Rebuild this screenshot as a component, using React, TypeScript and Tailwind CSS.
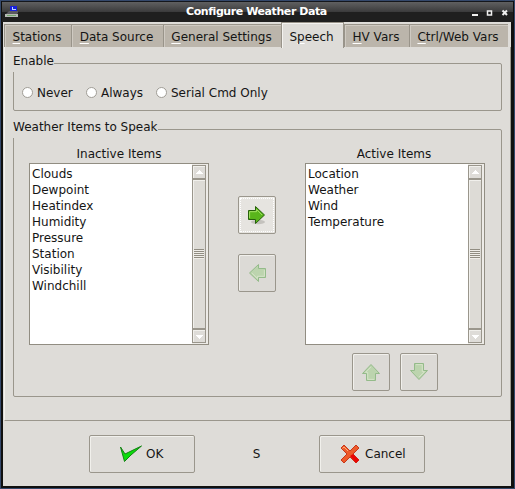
import React from 'react';

const edge = 'border border-[#9a968c] shadow-[inset_1px_1px_0_#f1f0ec]';

function Tab({ before = '', k, rest, w, active = false }: { before?: string; k: string; rest: string; w: string; active?: boolean }) {
  return (
    <div
      className={`${w} flex shrink-0 justify-center border-t border-l border-[#99948a] pr-[2px] ${
        active ? 'h-[26px] border-r bg-[#dedcd8] pt-[6px] shadow-[inset_1px_1px_0_#f4f3f0]' : 'mb-px h-[23px] bg-[#bbb5ab] pt-1 shadow-[inset_1px_1px_0_#cfcac2]'
      }`}
    >
      <span className="h-[17px] leading-[17px]">
        {before}
        <span className="underline decoration-white decoration-1 underline-offset-2">{k}</span>
        {rest}
      </span>
    </div>
  );
}

function Radio({ label, w }: { label: string; w: string }) {
  return (
    <label className={`${w} flex items-center`}>
      <span className="mr-[4px] h-[11px] w-[11px] rounded-full border border-[#a09d96] bg-white" />
      {label}
    </label>
  );
}

function ScrollButton({ down = false }: { down?: boolean }) {
  return (
    <div className={`h-[14px] w-[14px] shrink-0 bg-[#dedcd8] ${edge}`}>
      <svg width="12" height="12" shapeRendering="crispEdges">
        <path d={down ? 'M2 5h8l-4 4z' : 'M2 8h8l-4 -4z'} fill="#fff" />
      </svg>
    </div>
  );
}

function ListBox({ items }: { items: string[] }) {
  return (
    <div className="flex h-[182px] w-[180px] border border-[#918d82] bg-white">
      <ul className="grow pt-[2px] pl-[2px] leading-4">
        {items.map((i) => (
          <li key={i}>{i}</li>
        ))}
      </ul>
      <div className="flex w-[16px] flex-col bg-[#edebe7] py-px pr-[2px]">
        <ScrollButton />
        <div className={`flex w-[14px] grow flex-col items-center justify-center bg-[#dddbd6] ${edge}`}>
          {[0, 1, 2, 3, 4].map((n) => (
            <div key={n} className="h-[2px] w-[10px] border-t border-[#918d82] bg-[#f0eee9]" />
          ))}
        </div>
        <ScrollButton down />
      </div>
    </div>
  );
}

function Arrow({ turn = '', off = false, focus = false }: { turn?: string; off?: boolean; focus?: boolean }) {
  return (
    <button className={`flex h-[38px] w-[38px] rounded-[2px] p-px ${edge} ${off ? 'bg-[#dcdad6]' : 'bg-[#e6e4e0]'}`}>
      <span className={`flex h-full w-full items-center justify-center border ${focus ? 'border-dotted border-white' : 'border-transparent'}`}>
        <svg width="20" height="20" viewBox="0 0 20 20" className={`${turn} ${off ? 'opacity-65' : ''}`}>
          {!off && <ellipse cx="11" cy="17" rx="7" ry="2.2" fill="#77746c" opacity=".3" />}
          <path d="M1.500 5.500h7v-4l9 8.500-9 8.500v-4h-7z" fill={off ? '#acd299' : '#59b51b'} stroke={off ? '#6fab62' : '#27600c'} />
          <path d="M2.600 13V6.700h7V4.500l5.500 5.500" fill="none" stroke={off ? '#d3e8c2' : '#a3e064'} />
        </svg>
      </span>
    </button>
  );
}

export default function App() {
  return (
    <div className="flex h-[489px] w-[515px] flex-col overflow-hidden border border-[#34486b] bg-[#10100f] pr-[3px] pb-[2px] pl-[2px] font-['DejaVu_Sans',sans-serif] text-[12px] text-[#151515]">
      <header className="-mr-[2px] -ml-px flex h-[21px] shrink-0 items-center border-t border-[#15171c] bg-[linear-gradient(#606061,#3c3c3d_48%,#1f1f1f_50%,#1f1f1f)] text-white">
        <svg width="16" height="14" viewBox="0 0 16 14" className="ml-[3px] shrink-0">
          <path d="M5 1h7v5H5z" fill="#1720dc" />
          <path d="M7 2h1v2h3v1H7z" fill="#bcd6ff" />
          <path d="M2 8l2-2h9v2l-1 1H1z" fill="#5b5960" />
          <path d="M0 9h13v3H0z" fill="#b5b9b4" />
          <path d="M2 10h9v1H2z" fill="#71a66c" />
        </svg>
        <h1 className="grow pl-[165px] text-[11px] font-bold tracking-[-0.42px]">Configure Weather Data</h1>
        <svg width="38" height="10" viewBox="0 0 38 10" className="mr-[3px] shrink-0" fill="none" stroke="#f0f0f0">
          <path d="M0 8h6" strokeWidth="2" />
          <path d="M15.500 4h4v4h-4z" strokeWidth="1.5" />
          <path d="M30.500 3.500l4.500 4.500M35 3.500l-4.500 4.500" strokeWidth="2" />
        </svg>
      </header>
      <main className="flex min-h-0 grow flex-col bg-[#dedcd8]">
        <nav className="flex h-[26px] shrink-0 items-end pl-px">
          <Tab k="S" rest="tations" w="w-[67px]" />
          <Tab k="D" rest="ata Source" w="w-[92px]" />
          <Tab k="G" rest="eneral Settings" w="w-[118px]" />
          <Tab before="S" k="p" rest="eech" w="w-[63px]" active />
          <Tab k="H" rest="V Vars" w="w-[65px]" />
          <Tab k="C" rest="trl/Web Vars" w="w-[99px]" />
        </nav>
        <section className="-mt-px ml-px h-[374px] shrink-0 border-r border-b border-l border-[#9a968c] border-l-[#f3f2ef] px-[8px] pt-[7px]">
          <fieldset className="h-[57px] rounded-[2px] border border-[#9a968c]">
            <legend className="-ml-px h-[18px] leading-[14px]">Enable</legend>
            <div className="flex h-[32px] items-center pt-[9px] pl-[8px]">
              <Radio label="Never" w="w-[64px]" />
              <Radio label="Always" w="w-[70px]" />
              <Radio label="Serial Cmd Only" w="w-[130px]" />
            </div>
          </fieldset>
          <fieldset className="mt-[9px] h-[277px] rounded-[2px] border border-[#9a968c]">
            <legend className="-ml-px h-[18px] leading-[14px]">Weather Items to Speak</legend>
            <div className="flex pt-[9px] pl-[15px]">
              <div className="w-[180px]">
                <div className="h-[16px] text-center leading-[14px]">Inactive Items</div>
                <ListBox items={['Clouds', 'Dewpoint', 'Heatindex', 'Humidity', 'Pressure', 'Station', 'Visibility', 'Windchill']} />
              </div>
              <div className="flex w-[96px] flex-col items-center gap-[20px] pt-[49px]">
                <Arrow focus />
                <Arrow turn="rotate-180" off />
              </div>
              <div className="w-[180px]">
                <div className="h-[16px] pr-[2px] text-center leading-[14px]">Active Items</div>
                <ListBox items={['Location', 'Weather', 'Wind', 'Temperature']} />
                <div className="mt-[8px] flex gap-[10px] pl-[47px]">
                  <Arrow turn="-rotate-90" off />
                  <Arrow turn="rotate-90" off />
                </div>
              </div>
            </div>
          </fieldset>
        </section>
        <footer className="flex items-center pt-[14px] pl-[86px]">
          <button className={`flex h-[38px] w-[106px] items-center rounded-[2px] pl-[29px] ${edge}`}>
            <svg width="24" height="20" viewBox="0 0 24 20">
              <path d="M1.500 3l4.500 7L22.500 2 12 11 5.500 17.500z" fill="#0bdc0b" stroke="#138313" />
            </svg>
            <span className="ml-[3px]">OK</span>
          </button>
          <div className="w-[124px] pr-px text-center">S</div>
          <button className={`flex h-[38px] w-[106px] items-center rounded-[2px] pl-[20px] ${edge}`}>
            <svg width="20" height="20" viewBox="0 0 20 20">
              <path d="M1 4l3-3 6 6 6-6 3 3-6 6 6 6-3 3-6-6-6 6-3-3 6-6z" fill="#ed5a2a" stroke="#c8371a" />
              <path d="M10 12l3-2 6 6-3 3z" fill="#e80606" />
              <path d="M2.500 4.500L4 3l4 4" fill="none" stroke="#ffad76" />
            </svg>
            <span className="ml-[5px]">Cancel</span>
          </button>
        </footer>
      </main>
    </div>
  );
}
